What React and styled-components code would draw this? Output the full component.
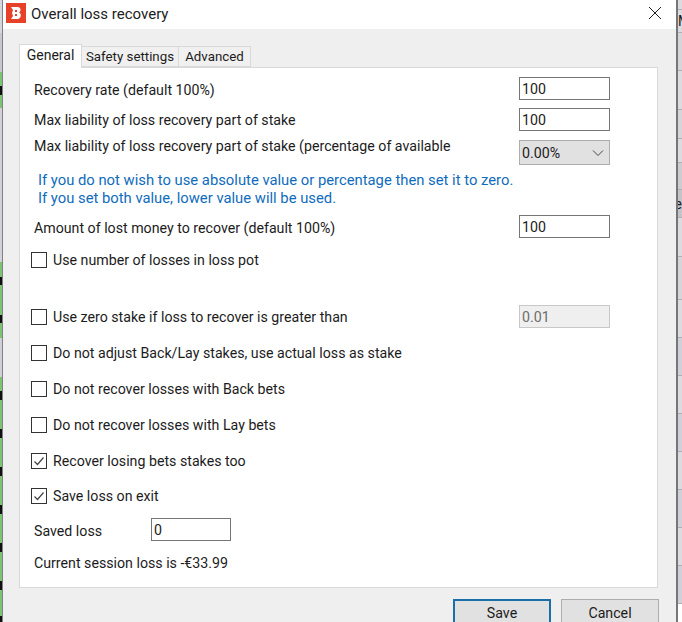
import React from 'react';
import styled, { createGlobalStyle } from 'styled-components';

const GlobalStyle = createGlobalStyle`
  html, body { margin: 0; padding: 0; background: #fff; }
  * { box-sizing: border-box; }
`;

const GREEN = '#7cc372';
const GREY = '#cfd0d8';
const LIGHT = '#dcdce0';
const MID = '#d6d6da';
const BLACK = '#111';

const leftCells = [
  [33, '#d6d6dc'], [39, '#c6c7d0'], [14, GREEN], [9, BLACK], [13, GREEN], [154, '#d2d3da'],
  [15, GREEN], [8, BLACK], [30, GREEN], [8, BLACK], [15, GREEN], [39, GREY], [14, GREEN],
  [9, BLACK], [29, GREEN], [9, BLACK], [29, GREEN], [9, BLACK], [29, GREEN], [9, BLACK],
  [29, GREEN], [9, BLACK], [29, GREEN], [9, BLACK], [26, GREEN], [6, BLACK],
];

const rightCells = [
  [10, LIGHT], [23, LIGHT, 'M'], [38, MID], [39, LIGHT], [29, MID], [24, LIGHT],
  [27, '#cdcdd1'], [28, '#c4c4c8', 'e'], [39, LIGHT], [43, MID], [38, LIGHT], [38, GREY],
  [38, LIGHT], [38, GREY], [38, LIGHT], [38, GREY], [38, LIGHT], [38, GREY],
];

const Screen = styled.div`
  width: 682px;
  height: 622px;
  overflow: hidden;
  display: flex;
  font-family: Roboto, "Liberation Sans", sans-serif;
  font-size: 14.2px;
  color: #1c1c1c;
`;

const LeftEdge = styled.div`
  width: 3px;
  flex: none;
  border-right: 1px solid #808086;
  overflow: hidden;
`;

const RightEdge = styled.div`
  width: 6px;
  flex: none;
  border-left: 2px solid #76767a;
  overflow: hidden;
`;

const EdgeCell = styled.div`
  height: ${props => props.$height}px;
  background: ${props => props.$color};
  display: flex;
  align-items: center;
  justify-content: ${props => (props.$end ? 'flex-end' : 'flex-start')};
  font-size: 14px;
  border-bottom: ${props => (props.$lined ? '1px solid #b0b0b4' : '0')};
`;

const Dialog = styled.div`
  flex: 1;
  display: flex;
  flex-direction: column;
  background: #efefef;
`;

const TitleBar = styled.div`
  height: 29px;
  flex: none;
  background: #fff;
  display: flex;
  padding: 3px 15px 0 3px;
`;

const Logo = styled.svg`
  width: 20px;
  height: 20px;
  flex: none;
`;

const Title = styled.div`
  margin-left: 5px;
  flex: 1;
  font-size: 15px;
  line-height: 22px;
  color: #222;
`;

const CloseIcon = styled.svg`
  width: 12px;
  height: 12px;
  margin-top: 4px;
`;

const Body = styled.div`
  padding: 15px 18px 0 16px;
  flex: 1;
  display: flex;
  flex-direction: column;
`;

const Tabs = styled.div`
  display: flex;
  align-items: flex-end;
  height: 23px;
  position: relative;
  z-index: 1;
`;

const Tab = styled.div`
  width: ${props => props.$width}px;
  height: ${props => (props.$active ? '24px' : '21px')};
  padding-bottom: ${props => (props.$active ? '3px' : '0')};
  font-size: ${props => (props.$active ? '14px' : '13.3px')};
  display: flex;
  align-items: center;
  justify-content: center;
  background: ${props => (props.$active ? '#fff' : '#f0f0f0')};
  border: 1px solid #d9d9d9;
  border-left-width: ${props => (props.$active ? '1px' : '0')};
  border-bottom-width: ${props => (props.$active ? '0' : '1px')};
  margin-bottom: ${props => (props.$active ? '-1px' : '0')};
`;

const Panel = styled.div`
  height: 521px;
  background: #fff;
  border: 1px solid #d9d9d9;
  padding: 0 47px 0 14px;
  display: flex;
  flex-direction: column;
`;

const Row = styled.div`
  flex: none;
  height: ${props => props.$height || 23}px;
  margin-top: ${props => props.$gap}px;
  display: flex;
  align-items: center;
  justify-content: space-between;
`;

const Label = styled.span`
  padding-top: 3px;
`;

const RaisedLabel = styled.span`
  align-self: flex-start;
  margin-top: -2px;
`;

const Field = styled.div`
  width: ${props => props.$width || 91}px;
  height: 23px;
  flex: none;
  border: 1px solid ${props => (props.$disabled ? '#c8c8c8' : '#767676')};
  background: ${props => (props.$disabled ? '#efefef' : '#fff')};
  color: ${props => (props.$disabled ? '#6d6d6d' : '#1c1c1c')};
  padding-left: 2px;
  display: flex;
  align-items: center;
`;

const Select = styled(Field)`
  background: #e1e1e1;
  border-color: #adadad;
  height: 25px;
  justify-content: space-between;
  padding-right: 5px;
`;

const Note = styled.div`
  margin-top: 6px;
  color: #0f6cbd;
  font-size: 14.8px;
  line-height: 18px;
  padding-left: 4px;
`;

const CheckLine = styled.div`
  display: flex;
  align-items: center;
  gap: 6px;
  margin-left: -3px;
`;

const Box = styled.div`
  width: 16px;
  height: 16px;
  border: 1px solid #333;
  background: #fff;
  display: flex;
  align-items: center;
  justify-content: center;
`;

const SavedRow = styled.div`
  margin-top: 14px;
  height: 23px;
  display: flex;
  align-items: center;
`;

const SavedLabel = styled.div`
  width: 117px;
  padding-top: 3px;
`;

const Footer = styled.div`
  display: flex;
  justify-content: flex-end;
  gap: 10px;
  padding-top: 11px;
  margin-right: -1px;
`;

const Button = styled.div`
  width: 98px;
  height: 27px;
  flex: none;
  background: #e1e1e1;
  border: ${props => (props.$primary ? '2px solid #1a6fa8' : '1px solid #adadad')};
  display: flex;
  align-items: center;
  justify-content: center;
`;

const Check = ({ checked, children }) => (
  <CheckLine>
    <Box>
      {checked && (
        <svg width="12" height="12" viewBox="0 0 12 12" fill="none" stroke="#444" strokeWidth="1.2">
          <path d="M1.5 6.5 L4.5 9.5 L10.5 2.5" />
        </svg>
      )}
    </Box>
    {children}
  </CheckLine>
);

const App = () => (
  <Screen>
    <GlobalStyle />
    <LeftEdge>
      {leftCells.map(([height, color], i) => <EdgeCell key={i} $height={height} $color={color} />)}
    </LeftEdge>
    <Dialog>
      <TitleBar>
        <Logo viewBox="0 0 20 20">
          <rect width="20" height="20" fill="#e8412a" />
          <path d="M5 4h6.5c2 0 3 1.2 3 2.8 0 1.2-.6 2-1.4 2.6 1 .5 1.7 1.4 1.7 2.8 0 2-1.4 3.8-3.4 3.8H5l2-3-1-3 1-3z" fill="#fff" />
          <path d="M9 7h2v2H9zM9 11h2v2H9z" fill="#e8412a" />
        </Logo>
        <Title>Overall loss recovery</Title>
        <CloseIcon viewBox="0 0 12 12" stroke="#222" strokeWidth="1">
          <path d="M0 0 L12 12 M12 0 L0 12" />
        </CloseIcon>
      </TitleBar>
      <Body>
        <Tabs>
          <Tab $active $width={63}>General</Tab>
          <Tab $width={97}>Safety settings</Tab>
          <Tab $width={72}>Advanced</Tab>
        </Tabs>
        <Panel>
          <Row $gap={9}><Label>Recovery rate (default 100%)</Label><Field>100</Field></Row>
          <Row $gap={8}><span>Max liability of loss recovery part of stake</span><Field>100</Field></Row>
          <Row $gap={9} $height={25}>
            <RaisedLabel>Max liability of loss recovery part of stake (percentage of available</RaisedLabel>
            <Select>0.00%
              <svg width="12" height="8" viewBox="0 0 12 8" fill="none" stroke="#444"><path d="M1 1.5 L6 6.5 L11 1.5" /></svg>
            </Select>
          </Row>
          <Note>If you do not wish to use absolute value or percentage then set it to zero.<br />If you set both value, lower value will be used.</Note>
          <Row $gap={8}><Label>Amount of lost money to recover (default 100%)</Label><Field>100</Field></Row>
          <Row $gap={14} $height={16}><Check>Use number of losses in loss pot</Check></Row>
          <Row $gap={37}><Check>Use zero stake if loss to recover is greater than</Check><Field $disabled>0.01</Field></Row>
          <Row $gap={17} $height={16}><Check>Do not adjust Back/Lay stakes, use actual loss as stake</Check></Row>
          <Row $gap={20} $height={16}><Check>Do not recover losses with Back bets</Check></Row>
          <Row $gap={20} $height={16}><Check>Do not recover losses with Lay bets</Check></Row>
          <Row $gap={20} $height={16}><Check checked>Recover losing bets stakes too</Check></Row>
          <Row $gap={19} $height={16}><Check checked>Save loss on exit</Check></Row>
          <SavedRow><SavedLabel>Saved loss</SavedLabel><Field $width={80}>0</Field></SavedRow>
          <Row $gap={13} $height={18}><span>Current session loss is -€33.99</span></Row>
        </Panel>
        <Footer>
          <Button $primary>Save</Button>
          <Button>Cancel</Button>
        </Footer>
      </Body>
    </Dialog>
    <RightEdge>
      {rightCells.map(([height, color, text], i) => (
        <EdgeCell key={i} $lined $height={height} $color={color} $end={text === 'e'}>{text}</EdgeCell>
      ))}
    </RightEdge>
  </Screen>
);

export default App;
